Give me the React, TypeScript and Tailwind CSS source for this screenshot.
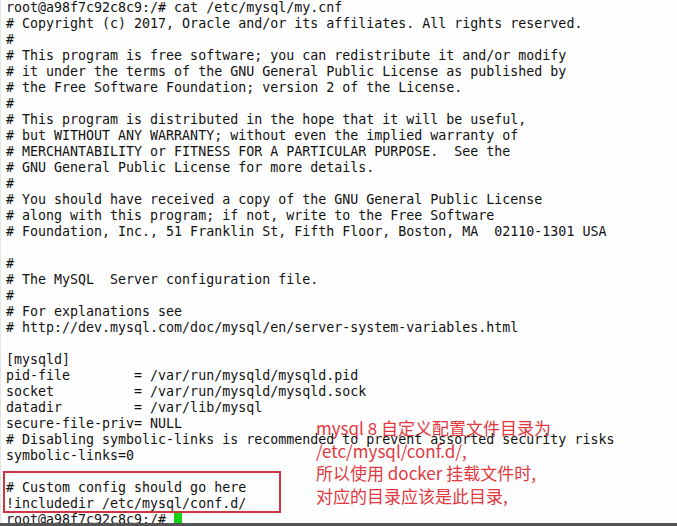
import React from "react";

const lines: string[] = [
  "root@a98f7c92c8c9:/# cat /etc/mysql/my.cnf",
  "# Copyright (c) 2017, Oracle and/or its affiliates. All rights reserved.",
  "#",
  "# This program is free software; you can redistribute it and/or modify",
  "# it under the terms of the GNU General Public License as published by",
  "# the Free Software Foundation; version 2 of the License.",
  "#",
  "# This program is distributed in the hope that it will be useful,",
  "# but WITHOUT ANY WARRANTY; without even the implied warranty of",
  "# MERCHANTABILITY or FITNESS FOR A PARTICULAR PURPOSE.  See the",
  "# GNU General Public License for more details.",
  "#",
  "# You should have received a copy of the GNU General Public License",
  "# along with this program; if not, write to the Free Software",
  "# Foundation, Inc., 51 Franklin St, Fifth Floor, Boston, MA  02110-1301 USA",
  "",
  "#",
  "# The MySQL  Server configuration file.",
  "#",
  "# For explanations see",
  "# http://dev.mysql.com/doc/mysql/en/server-system-variables.html",
  "",
  "[mysqld]",
  "pid-file        = /var/run/mysqld/mysqld.pid",
  "socket          = /var/run/mysqld/mysqld.sock",
  "datadir         = /var/lib/mysql",
  "secure-file-priv= NULL",
  "# Disabling symbolic-links is recommended to prevent assorted security risks",
  "symbolic-links=0",
  "",
  "# Custom config should go here",
  "!includedir /etc/mysql/conf.d/",
];

export default function App() {
  return (
    <div className="w-[677px] h-[526px] overflow-hidden bg-[#fefefe] flex flex-col">
      <div className="relative flex-1 overflow-hidden border-l border-[#e4e4e4]">
        {/* annotation overlay */}
        <div
          className="absolute left-[315px] top-[417px] text-[17px] leading-[22.5px] text-[#e2383f] whitespace-pre"
          style={{ fontFamily: '"Noto Sans CJK SC", "Noto Sans", sans-serif' }}
        >
          <div>mysql 8 自定义配置文件目录为</div>
          <div>/etc/mysql/conf.d/,</div>
          <div>所以使用 docker 挂载文件时,</div>
          <div>对应的目录应该是此目录,</div>
        </div>
        {/* highlight box */}
        <div className="absolute left-[2px] top-[471px] w-[278px] h-[42px] border-2 border-[#cf3540]" />
        <pre
          className="relative pl-[5px] text-[13.3px] leading-[16px] text-[#111] whitespace-pre"
          style={{ fontFamily: '"DejaVu Sans Mono", "Liberation Mono", monospace' }}
        >
          {lines.map((l, i) => (
            <div key={i} className="h-[16px]">
              {l}
            </div>
          ))}
          <div className="h-[16px] flex items-start">
            <span>root@a98f7c92c8c9:/# </span>
            <span className="inline-block w-[8px] h-[13px] mt-[1px] bg-[#13d313]" />
          </div>
        </pre>
      </div>
      <div className="h-[3px] bg-[#545454] shrink-0" />
    </div>
  );
}
